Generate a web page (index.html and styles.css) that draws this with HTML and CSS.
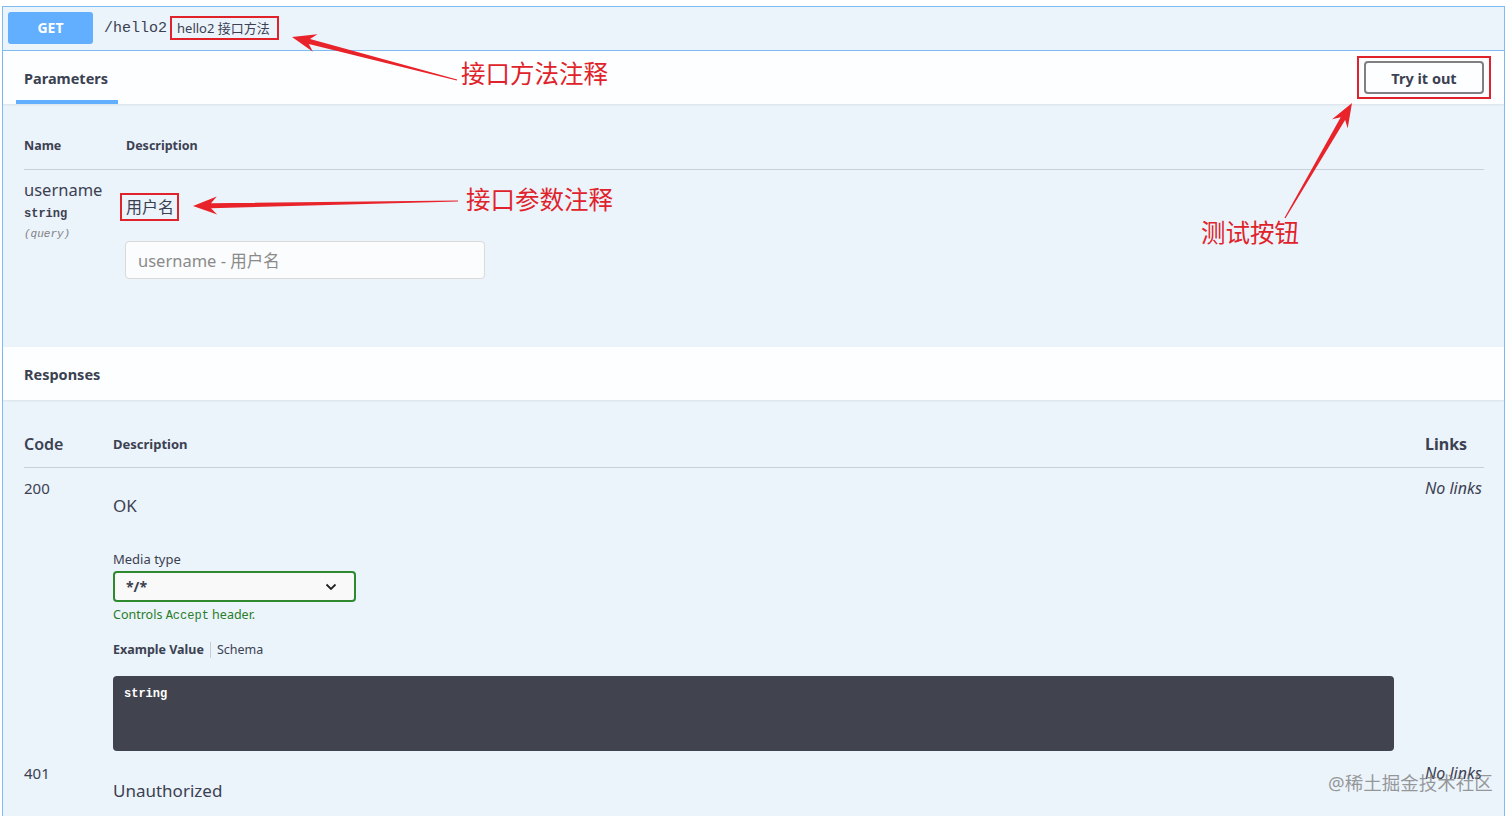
FILE: index.html
```html
<!DOCTYPE html>
<html lang="zh-CN">
  <head>
    <meta charset="utf-8" />
    <meta name="viewport" content="width=device-width, initial-scale=1.0" />
    <title>Swagger - hello2</title>
    <link rel="stylesheet" href="styles.css">
  </head>
  <body>
    <div class="opblock">
      <div class="summary">
        <span class="method">GET</span>
        <span class="path">/hello2</span>
        <span class="mark-box summary-desc">hello2 接口方法</span>
      </div>

      <div class="section-header">
        <div class="tab-item"><h4>Parameters</h4></div>
        <span class="mark-box try-box"><button class="try-out">Try it out</button></span>
      </div>

      <div class="params-body">
        <div class="params-head">
          <div class="col-name">Name</div>
          <div class="col-desc">Description</div>
        </div>
        <div class="params-row">
          <div class="col-name">
            <div class="param-name">username</div>
            <div class="param-type">string</div>
            <div class="param-in">(query)</div>
          </div>
          <div class="col-desc">
            <span class="mark-box param-desc">用户名</span>
            <input class="param-input" type="text" placeholder="username - 用户名" />
          </div>
        </div>
      </div>

      <div class="section-header responses-header">
        <h4>Responses</h4>
      </div>

      <div class="responses-body">
        <div class="resp-head">
          <div class="resp-code">Code</div>
          <div class="resp-desc">Description</div>
          <div class="resp-links">Links</div>
        </div>

        <div class="resp-row">
          <div class="resp-code">200</div>
          <div class="resp-desc">
            <p class="resp-text">OK</p>
            <div class="media-label">Media type</div>
            <div class="media-select">
              <span>*/*</span>
              <svg width="12" height="8" viewBox="0 0 12 8"><path d="M1.5 1.5 L6 6 L10.5 1.5" fill="none" stroke="#222" stroke-width="1.8"/></svg>
            </div>
            <div class="media-note">Controls <code>Accept</code> header.</div>
            <ul class="example-tabs">
              <li class="active">Example Value</li>
              <li>Schema</li>
            </ul>
            <pre class="example-code">string</pre>
          </div>
          <div class="resp-links no-links">No links</div>
        </div>

        <div class="resp-row">
          <div class="resp-code">401</div>
          <div class="resp-desc">
            <p class="resp-text">Unauthorized</p>
          </div>
          <div class="resp-links no-links">No links</div>
        </div>
      </div>
    </div>

    <!-- annotations drawn over the screenshot -->
    <div class="notes">
      <svg class="arrows" width="1512" height="816" viewBox="0 0 1512 816">
        <polygon points="292,37 317.5,34.3 310.0,39.1 457.2,79.4 456.8,80.6 308.8,43.9 312.9,51.8" />
        <polygon points="193,206 216.8,196.6 211,203.2 458,200.4 458,201.6 211,208.2 217.2,214.6" />
        <polygon points="1352,103 1347.7,128.3 1345.1,119.9 1285.5,218.3 1284.5,217.7 1340.7,117.3 1332.1,119.2" />
      </svg>
      <span class="note note-method">接口方法注释</span>
      <span class="note note-param">接口参数注释</span>
      <span class="note note-try">测试按钮</span>
      <span class="watermark">@稀土掘金技术社区</span>
    </div>
  </body>
</html>
```

FILE: styles.css
```css
* {
  box-sizing: border-box;
}
body {
  margin: 0;
  background: #ffffff;
  font-family: "Noto Sans", "Noto Sans CJK SC", sans-serif;
  color: #3b4151;
  position: relative;
  overflow: hidden;
  height: 816px;
}
.opblock {
  margin: 6px 0 0 2px;
  width: 1503px;
  border: 1px solid #7fbcf3;
  background: #ebf3fb;
}
.summary {
  display: flex;
  align-items: center;
  padding: 5px 5px 6px;
  border-bottom: 1px solid #7fbcf3;
}
.method {
  width: 85px;
  height: 32px;
  line-height: 32px;
  text-align: center;
  background: #61affe;
  color: #ffffff;
  font-weight: 700;
  font-size: 14px;
  border-radius: 3px;
}
.path {
  margin-left: 11px;
  font-family: "Liberation Mono", "DejaVu Sans Mono", monospace;
  font-size: 15px;
  color: #3b4151;
}
.mark-box {
  border: 2px solid #e0232b;
}
.summary-desc {
  margin-left: 3px;
  padding: 0 7px 0 5px;
  font-size: 13px;
  line-height: 20px;
  color: #3b4151;
}
.section-header {
  display: flex;
  align-items: center;
  justify-content: space-between;
  height: 53px;
  padding: 0 13px 0 13px;
  background: rgba(255, 255, 255, 0.85);
  box-shadow: 0 1px 2px rgba(0, 0, 0, 0.08);
}
.section-header h4 {
  margin: 0;
  font-size: 14.5px;
  font-weight: 700;
}
.tab-item {
  align-self: stretch;
  display: flex;
  align-items: center;
  padding: 4px 10px 0 8px;
  border-bottom: 4px solid #61affe;
}
.try-box {
  padding: 3px 5px;
  display: flex;
}
.try-out {
  width: 120px;
  height: 33px;
  background: transparent;
  border: 2px solid #808080;
  border-radius: 4px;
  font-family: inherit;
  font-size: 14.5px;
  font-weight: 700;
  color: #3b4151;
}
.params-body {
  padding: 20px 20px 68px 21px;
}
.params-head {
  display: flex;
  padding: 14px 0 15px;
  line-height: 16px;
  font-size: 12.5px;
  font-weight: 700;
  border-bottom: 1px solid rgba(59, 65, 81, 0.2);
}
.col-name {
  width: 96px;
  flex: none;
}
.col-desc {
  flex: 1;
}
.params-head .col-desc {
  padding-left: 6px;
}
.params-row {
  display: flex;
  padding-top: 9px;
}
.param-name {
  font-size: 16.5px;
  line-height: 22px;
}
.param-type {
  margin-top: 5px;
  font-family: "Liberation Mono", "DejaVu Sans Mono", monospace;
  font-size: 12px;
  font-weight: 700;
  line-height: 16px;
}
.param-in {
  margin-top: 4px;
  font-family: "Liberation Mono", "DejaVu Sans Mono", monospace;
  font-size: 11px;
  font-style: italic;
  line-height: 16px;
  color: #808080;
}
.param-desc {
  display: inline-block;
  margin-top: 14px;
  padding: 0 3px 0 4px;
  font-size: 16px;
  line-height: 24px;
}
.param-input {
  display: block;
  margin: 20px 0 0 5px;
  width: 360px;
  height: 38px;
  padding: 0 12px;
  border: 1px solid #d9d9d9;
  border-radius: 4px;
  background: #fbfcfd;
  font-family: inherit;
  font-size: 16.5px;
}
.param-input::placeholder {
  color: #8a8a8a;
}
.responses-header {
  padding-left: 21px;
}
.responses-body {
  padding: 20px 20px 80px 21px;
}
.resp-head,
.resp-row {
  display: grid;
  grid-template-columns: 89px 1fr 59px;
}
.resp-head {
  padding: 12px 0 11px;
  line-height: 24px;
  border-bottom: 1px solid rgba(59, 65, 81, 0.2);
  font-weight: 700;
}
.resp-head .resp-code {
  font-size: 16px;
  font-weight: 600;
}
.resp-head .resp-desc {
  font-size: 13px;
}
.resp-head .resp-links {
  font-size: 16px;
}
.resp-row {
  padding: 10px 0 2px;
}
.resp-row .resp-code {
  font-size: 15px;
  line-height: 20px;
}
.resp-desc {
  padding-right: 31px;
}
.resp-text {
  margin: 16px 0 0;
  font-size: 17px;
  line-height: 24px;
}
.no-links {
  font-size: 16px;
  font-style: italic;
  line-height: 20px;
  white-space: nowrap;
}
.media-label {
  margin-top: 32px;
  font-size: 13px;
  line-height: 18px;
}
.media-select {
  display: flex;
  align-items: center;
  justify-content: space-between;
  margin-top: 3px;
  width: 243px;
  height: 31px;
  padding: 0 17px 0 11px;
  border: 2px solid #2f8a2f;
  border-radius: 4px;
  background: #f8f9f8;
  font-size: 14px;
  font-weight: 700;
}
.media-note {
  margin-top: 5px;
  font-size: 12.5px;
  line-height: 16px;
  color: #2a7d2a;
}
.media-note code {
  font-family: "Liberation Mono", "DejaVu Sans Mono", monospace;
  font-size: 12px;
}
.example-tabs {
  display: flex;
  margin: 18px 0 0;
  padding: 0;
  list-style: none;
  font-size: 12.5px;
  line-height: 16px;
}
.example-tabs li {
  padding-right: 6px;
}
.example-tabs li.active {
  font-weight: 700;
  border-right: 1px solid #c8ccd4;
  margin-right: 6px;
}
.example-code {
  margin: 18px 0 0;
  height: 75px;
  padding: 10px 11px;
  border-radius: 4px;
  background: #41444e;
  color: #ffffff;
  font-family: "Liberation Mono", "DejaVu Sans Mono", monospace;
  font-size: 12px;
  font-weight: 700;
  line-height: 16px;
}
.notes {
  position: absolute;
  left: 0;
  top: 0;
  width: 1512px;
  height: 816px;
  pointer-events: none;
}
.arrows {
  position: absolute;
  left: 0;
  top: 0;
}
.arrows polygon {
  fill: #e8232a;
}
.note {
  position: absolute;
  font-size: 24.5px;
  line-height: 30px;
  color: #e0232b;
  white-space: nowrap;
}
.note-method {
  left: 461px;
  top: 59px;
}
.note-param {
  left: 466px;
  top: 185px;
}
.note-try {
  left: 1201px;
  top: 218px;
}
.watermark {
  position: absolute;
  left: 1328px;
  top: 771px;
  font-size: 18.5px;
  line-height: 24px;
  color: rgba(120, 120, 120, 0.75);
  white-space: nowrap;
}
```
